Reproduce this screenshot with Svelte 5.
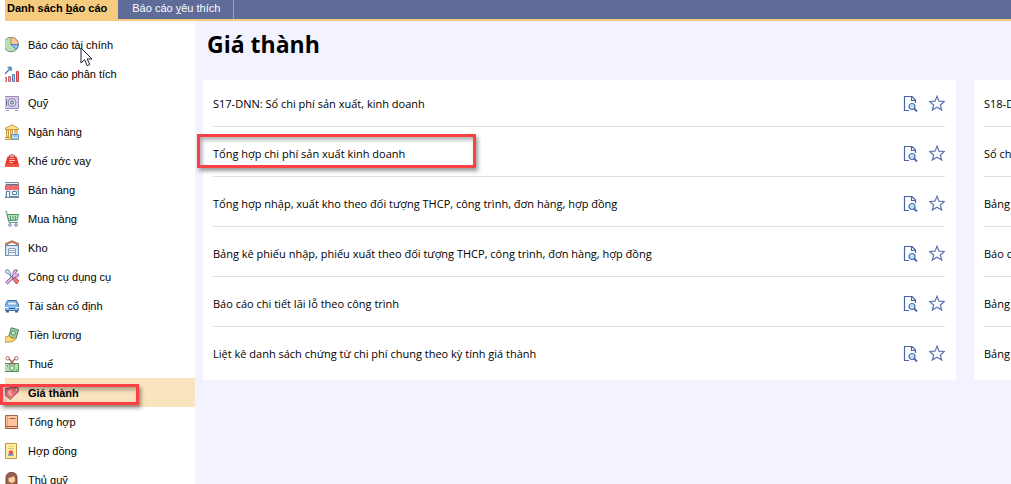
<script>
	let active = 'Giá thành';

	const groups = [
		{ name: 'Báo cáo tài chính', icon: 'pie' },
		{ name: 'Báo cáo phân tích', icon: 'chart' },
		{ name: 'Quỹ', icon: 'safe' },
		{ name: 'Ngân hàng', icon: 'bank' },
		{ name: 'Khế ước vay', icon: 'loan' },
		{ name: 'Bán hàng', icon: 'shop' },
		{ name: 'Mua hàng', icon: 'cart' },
		{ name: 'Kho', icon: 'warehouse' },
		{ name: 'Công cụ dụng cụ', icon: 'tools' },
		{ name: 'Tài sản cố định', icon: 'car' },
		{ name: 'Tiền lương', icon: 'salary' },
		{ name: 'Thuế', icon: 'tax' },
		{ name: 'Giá thành', icon: 'tag' },
		{ name: 'Tổng hợp', icon: 'book' },
		{ name: 'Hợp đồng', icon: 'contract' },
		{ name: 'Thủ quỹ', icon: 'cashier' }
	];

	const columns = [
		[
			'S17-DNN: Sổ chi phí sản xuất, kinh doanh',
			'Tổng hợp chi phí sản xuất kinh doanh',
			'Tổng hợp nhập, xuất kho theo đối tượng THCP, công trình, đơn hàng, hợp đồng',
			'Bảng kê phiếu nhập, phiếu xuất theo đối tượng THCP, công trình, đơn hàng, hợp đồng',
			'Báo cáo chi tiết lãi lỗ theo công trình',
			'Liệt kê danh sách chứng từ chi phí chung theo kỳ tính giá thành'
		],
		['S18-DNN', 'Sổ chi tiết', 'Bảng kê', 'Báo cáo', 'Bảng kê', 'Bảng kê']
	];

	const marked = 'Tổng hợp chi phí sản xuất kinh doanh';
</script>

<div class="app">
	<nav class="tabs">
		<button class="tab tab--active">Danh sách <u>b</u>áo cáo</button>
		<button class="tab">Báo cáo <u>y</u>êu thích</button>
	</nav>

	<div class="body">
		<aside>
			<ul class="menu">
				{#each groups as group}
					<li class="menu__item" class:menu__item--active={group.name === active}>
						<button on:click={() => (active = group.name)}>
							<svg class="menu__icon" viewBox="0 0 14 16" aria-hidden="true">
								{#if group.icon === 'pie'}
									<circle cx="6" cy="7.500" r="7.300" fill="#b9e0b4" stroke="#6f9a78" />
									<path d="M6 .2A7.300 7.300 0 0 1 13.300 7.500H6Z" fill="#ffc9a0" stroke="#c07a5a" />
									<path d="M6 7.500h7.300a7.300 7.300 0 0 1-2.200 5.100Z" fill="#8fc3f2" stroke="#4f83bd" />
								{:else if group.icon === 'chart'}
									<path d="M0 8 5.500 2M2.500 1.500h3.500V5" fill="none" stroke="#4a7fb5" stroke-width="1.400" />
									<path d="M0 11.500h1.500v4H0M3.500 10.500h2v5h-2z" fill="#ffb0b0" stroke="#c9636c" />
									<path d="M7.500 8.500h2v7h-2z" fill="#a9d3f5" stroke="#4a7fb5" />
									<path d="M11.500 5.500h2v10h-2z" fill="#f47b80" stroke="#c9434c" />
								{:else if group.icon === 'safe'}
									<path d="M0 1.500h13.500v12H0M1 15.500h3M10 15.500h3" fill="#d9cdf0" stroke="#9b8abc" />
									<circle cx="7" cy="7.500" r="4" fill="#e8e4f2" stroke="#857aa5" />
									<circle cx="7" cy="7.500" r="1.700" fill="#b8cbd8" stroke="#50788e" />
									<path d="M1.500 4v7" stroke="#766b98" />
								{:else if group.icon === 'bank'}
									<path d="M0 5.500V4.500L7 .8l6.500 3.700v1ZM0 13.500h13.500v2H0M1.500 6h2v7h-2zM5.500 6h2v7h-2zM10 6h2v7h-2z" fill="#ffe28a" stroke="#c99a45" />
									<path d="M6.500 10.500h7v4.500h-7z" fill="#cae5ff" stroke="#5b98d2" />
									<path d="M8 12h4" stroke="#5b98d2" />
								{:else if group.icon === 'loan'}
									<path d="M4.500 4V2.500Q7 1 9.500 2.500V4" fill="none" stroke="#8a4a48" />
									<path d="M2.500 3.500h9L14 12V14H0v-2Z" fill="#e7382d" />
									<path d="M0 11h14v3H0Z" fill="#f2553f" />
									<path d="M4.500 5.500h5M4 7.500h6M4 9.500h4" stroke="#ffb8ae" />
								{:else if group.icon === 'shop'}
									<path d="M0 .5h13.500v14H0" fill="#e9f1f7" stroke="#718ca3" />
									<path d="M1 2.500h12" stroke="#557694" />
									<path d="M0 3.500h14v3.500q-1.500 2-3 0-1.500 2-3.500 0-2 2-3.500 0-2 2-4 0Z" fill="#f36b70" stroke="#d04f55" stroke-width=".7" />
									<path d="M1.500 9.500h3v6h-3zM7.500 9.500h4v3h-4z" fill="#fff" stroke="#527fa6" />
									<path d="M0 15.500h14" stroke="#718ca3" />
								{:else if group.icon === 'cart'}
									<path d="M2 3.500h11.500L12 9.500H3.500Z" fill="#b7e3bc" stroke="#4c9a63" />
									<path d="M0 .5h1.500l2.500 11h9M5.500 5v4M8 5v4M10.500 5v4" fill="none" stroke="#5c9b78" />
									<circle cx="5" cy="14" r="1.300" fill="#fff" stroke="#687faf" />
									<circle cx="11" cy="14" r="1.300" fill="#fff" stroke="#687faf" />
								{:else if group.icon === 'warehouse'}
									<path d="M.5 5.500h13v10H.5z" fill="#d9e9f7" stroke="#5b84aa" />
									<path d="M0 4.500 7 1.500 14 4.500" fill="none" stroke="#b9755a" stroke-width="2.200" />
									<path d="M3.500 8.500h7v7h-7zM4 10.500h6M4 12.500h6" fill="#f8fbff" stroke="#8aa2bb" />
								{:else if group.icon === 'tools'}
									<path d="M12.500 1 9.500 1 8 3.500v2.500L.8 13l1.700 2 7.500-7h2.500L14 5l-2 .500L10.500 4Z" fill="#dfb8e7" stroke="#84659a" />
									<path d="m1 1 2-.5 3 4.500-1 1L0 3Z" fill="#d6e4ef" stroke="#738da4" />
									<path d="m5 6 4 4" stroke="#637e9c" stroke-width="1.500" />
									<path d="m8 10.500 2-2 4 3.500-2.500 3Z" fill="#f6787b" stroke="#b8474f" />
								{:else if group.icon === 'car'}
									<path d="M0 7 2.500 2.500h9L13.500 7v5.500H0Z" fill="#8dbdf2" stroke="#4476ad" />
									<path d="M3.300 4h7.500l1 3H2Z" fill="#e7f5ff" stroke="#5588bd" stroke-width=".7" />
									<path d="M0 9.500h3M11 9.500h3" stroke="#fff" />
									<path d="M4 10.500h6" stroke="#365f94" />
									<path d="M1 12.500h3v2H1zM10 12.500h3v2h-3z" fill="#47698f" />
								{:else if group.icon === 'salary'}
									<path d="m6 .8 7.500 2-2.500 9-7-2Z" fill="#9acd9b" stroke="#4c8760" />
									<circle cx="8.500" cy="6" r="2" fill="#d7edce" stroke="#598f61" />
									<path d="M0 10.500 4 8.500 6 11h4.500l-1 2.500-4 1.500H0Z" fill="#ffdc79" stroke="#bd8c3b" />
								{:else if group.icon === 'tax'}
									<path d="M0 7.500h13.500v8H0" fill="#b6deb1" stroke="#558f58" />
									<circle cx="7" cy="12" r="2.300" fill="#e3f3d7" stroke="#558f58" />
									<path d="M2 10h1M11 14h1" stroke="#387b48" />
									<path d="m4 3 6 6M10 3 4 9" stroke="#976b58" stroke-width="1.300" />
									<circle cx="2.700" cy="2.300" r="1.700" fill="#fff" stroke="#ad5f51" />
									<circle cx="11.300" cy="2.300" r="1.700" fill="#fff" stroke="#ad5f51" />
								{:else if group.icon === 'tag'}
									<path d="M0 4 8 2l5.500 1-.5 4-8 7.500-5-5Z" fill="#e87478" stroke="#ac4a51" />
									<path d="M7 5Q4 4.500 4 7.500t3.500 2.500M3 7h4M3.500 9h2.500" fill="none" stroke="#ffd0cf" stroke-width=".8" />
									<circle cx="11.500" cy="4.500" r=".8" fill="#fff" />
								{:else if group.icon === 'book'}
									<path d="M.5 1.500h12v13H.5z" fill="#ffc49c" stroke="#9e624e" />
									<path d="M2.500 2v12" stroke="#e0a582" />
									<path d="M4.500 4.500h6M1 12.500h11" stroke="#9e624e" />
								{:else if group.icon === 'contract'}
									<path d="M.5.5h11v15H.5z" fill="#ffef9d" stroke="#b6984e" />
									<path d="M4 3.500h4M3 5.500h6" stroke="#dcc77c" />
									<path d="m4.500 9-2 4 2-.5 1 1 1-1 2.500.5-2-4Z" fill="#6196c8" />
									<circle cx="6" cy="9.500" r="2.200" fill="#e55458" />
								{:else}
									<path d="M1 12V6Q1 .5 6.500.5T12 6v6l-3 2H4Z" fill="#99614b" stroke="#70483c" />
									<path d="M3.500 6Q7 5.500 8.500 4L10 6.500V9q-3 4-6.500 0Z" fill="#ffd0a0" />
									<path d="M0 16q1-4 5-4l2 1 2-1q4 0 5 4Z" fill="#e3a33f" />
								{/if}
							</svg>
							{group.name}
						</button>
						{#if group.name === 'Giá thành'}
							<span class="mark mark--menu"></span>
						{/if}
					</li>
				{/each}
			</ul>
		</aside>

		<main>
			<h1>Giá thành</h1>
			<div class="columns">
				{#each columns as reports}
					<ul class="reports">
						{#each reports as report}
							<li class="report">
								<a href="#report">{report}</a>
								<button aria-label="Xem báo cáo">
									<svg class="icon icon--view" viewBox="0 0 15 17">
										<path d="M6 15.500H1.500V1.500H9L12.500 5v3M8.500 1.500v4h4" fill="none" stroke="#4b64a8" stroke-width="1.200" />
										<circle cx="9" cy="11.500" r="3" fill="#bde2fa" stroke="#4b70b0" stroke-width="1.200" />
										<path d="m11 13.500 3 3" stroke="#4b64a8" stroke-width="1.800" />
									</svg>
								</button>
								<button aria-label="Yêu thích">
									<svg class="icon icon--star" viewBox="0 0 16 16">
										<path d="m8 1.300 2 4.900 5.300.300-4 3.500 1.400 5.100L8 12.300l-4.700 2.800 1.400-5.100L.7 6.500 6 6.200Z" fill="#fff" stroke="#6074b2" stroke-width="1.200" />
									</svg>
								</button>
								{#if report === marked}
									<span class="mark mark--report"></span>
								{/if}
							</li>
						{/each}
					</ul>
				{/each}
			</div>
		</main>
	</div>

	<svg class="pointer" viewBox="0 0 13 20" aria-hidden="true">
		<path d="M1 1v15l3.500-3.300 2.700 6 2.600-1.200-2.600-5.500H12Z" fill="#fff" stroke="#202030" />
	</svg>
</div>

<style>
	:global(body) {
		margin: 0;
	}

	.app {
		position: relative;
		display: flex;
		flex-direction: column;
		height: 100vh;
		overflow: hidden;
		padding-left: 5px;
		box-sizing: border-box;
		background: #fff;
		color: #000;
		font-family: 'Liberation Sans', Arial, sans-serif;
		font-size: 11px;
	}

	button {
		padding: 0;
		border: 0;
		background: none;
		color: inherit;
		font: inherit;
		cursor: pointer;
	}

	ul {
		margin: 0;
		padding: 0;
		list-style: none;
	}

	.tabs {
		display: flex;
		flex: none;
		height: 19px;
		border-bottom: 2px solid #f5cb80;
		background: #5f6b99;
	}

	.tab {
		padding: 0 13px 3px 14px;
		border-right: 1px solid #8f9fd0;
		color: #fff;
	}

	.tab--active {
		padding: 0 11px 3px 2px;
		border-right: 0;
		background: #f5cb80;
		color: #000;
		font-weight: bold;
	}

	.body {
		display: flex;
		flex: 1;
		min-height: 0;
	}

	aside {
		flex: none;
		width: 190px;
		padding-top: 9px;
	}

	.menu__item {
		position: relative;
		height: 29px;
	}

	.menu__item button {
		display: flex;
		align-items: center;
		gap: 9px;
		width: 100%;
		height: 100%;
		text-align: left;
	}

	.menu__item--active {
		background: #fae3bf;
		font-weight: bold;
	}

	.menu__icon {
		width: 14px;
		height: 16px;
	}

	main {
		flex: 1;
		min-width: 0;
		overflow: hidden;
		padding-left: 8px;
		background: #f2f3ff;
		font-family: 'Open Sans', 'Segoe UI', sans-serif;
	}

	h1 {
		margin: 0;
		padding: 7px 4px 20px;
		font-size: 23px;
		line-height: 32px;
	}

	.columns {
		display: flex;
		gap: 18px;
	}

	.reports {
		display: grid;
		flex: 0 0 calc(100% - 55px);
		gap: 3px;
		box-sizing: border-box;
		padding: 0 11px 3px 10px;
		background: #fff;
	}

	.report {
		position: relative;
		display: flex;
		align-items: center;
		height: 46px;
		border-bottom: 1px solid #dfdfdf;
	}

	.report:last-child {
		border-color: transparent;
	}

	.report a {
		flex: 1;
		color: inherit;
		text-decoration: none;
	}

	.icon {
		display: block;
	}

	.icon--view {
		width: 15px;
		height: 17px;
		margin-right: 11px;
	}

	.icon--star {
		width: 16px;
		height: 16px;
	}

	/* red highlight frames */
	.mark {
		position: absolute;
		z-index: 1;
		box-sizing: border-box;
		border: 3px solid #fc4145;
		box-shadow: 2px 3px 4px rgba(0, 0, 0, 0.4), inset 2px 3px 4px rgba(0, 0, 0, 0.3);
		pointer-events: none;
	}

	.mark--menu {
		top: 6px;
		left: -5px;
		width: 139px;
		height: 21px;
	}

	.mark--report {
		top: 4px;
		left: -16px;
		width: 279px;
		height: 34px;
	}

	.pointer {
		position: absolute;
		top: 47px;
		left: 80px;
		width: 13px;
		height: 20px;
	}
</style>
